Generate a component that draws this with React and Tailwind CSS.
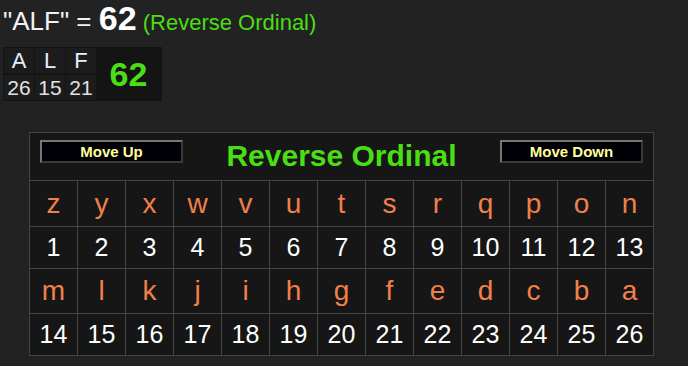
import React from 'react';

const WORD = [
  { ch: 'A', val: 26 },
  { ch: 'L', val: 15 },
  { ch: 'F', val: 21 },
];

// reverse ordinal: z=1 ... a=26
const ROWS = [
  'zyxwvutsrqpon'.split(''),
  'mlkjihgfedcba'.split(''),
];

const GREEN = 'text-[#4ade14]';

const MoveButton = ({ children }) => (
  <button className="w-[143px] h-[23px] bg-[#000006] border-2 border-t-[#777] border-l-[#777] border-b-[#3a3a3a] border-r-[#3a3a3a] text-[#ffff99] text-[15px] font-bold leading-none">
    {children}
  </button>
);

export default function App() {
  return (
    <div
      className="min-h-screen bg-[#222] text-white"
      style={{ fontFamily: '"Liberation Sans", Arial, sans-serif' }}
    >
      {/* Result line */}
      <div className="pl-[3px] leading-[36px] whitespace-nowrap">
        <span className="text-[26px] text-[#f2f2f2]">"ALF" = </span>
        <span className="text-[34px] font-bold">62</span>
        <span className={`text-[22px] ${GREEN}`}> (Reverse Ordinal)</span>
      </div>

      {/* Letter breakdown */}
      <div className="ml-[3px] mt-[4px] inline-flex bg-[#141414] p-px">
        <div className="grid grid-cols-3 gap-x-px gap-y-[2px]">
          {WORD.map((w) => (
            <div key={w.ch} className="w-[30px] h-[25px] bg-[#1c1c1c] flex items-center justify-center text-[22px] text-[#e6efff]">
              {w.ch}
            </div>
          ))}
          {WORD.map((w) => (
            <div key={w.ch + w.val} className="w-[30px] h-[25px] bg-[#1c1c1c] flex items-center justify-center text-[21px] text-[#e2e2e2]">
              {w.val}
            </div>
          ))}
        </div>
        <div className={`w-[65px] flex items-center justify-center text-[34px] font-bold ${GREEN}`}>
          62
        </div>
      </div>

      {/* Cipher chart */}
      <div className="ml-[29px] mt-[31px] w-[625px] bg-[#444] p-px flex flex-col gap-px">
        <div className="h-[47px] bg-[#161616] px-[10px] pt-[7px] flex items-start justify-between">
          <MoveButton>Move Up</MoveButton>
          <div className={`text-[30px] font-bold leading-none mt-[1px] ${GREEN}`}>Reverse Ordinal</div>
          <MoveButton>Move Down</MoveButton>
        </div>
        {ROWS.map((row, r) => (
          <React.Fragment key={r}>
            <div className="grid grid-cols-13 gap-px">
              {row.map((ch) => (
                <div
                  key={ch}
                  className={`${r === 0 ? 'h-[45px]' : 'h-[44px]'} bg-[#161616] flex items-center justify-center text-[28px] text-[#f0804a]`}
                >
                  {ch}
                </div>
              ))}
            </div>
            <div className="grid grid-cols-13 gap-px">
              {row.map((ch, i) => (
                <div key={ch} className="h-[41px] bg-[#161616] flex items-center justify-center text-[25px] text-white">
                  {r * 13 + i + 1}
                </div>
              ))}
            </div>
          </React.Fragment>
        ))}
      </div>
    </div>
  );
}
